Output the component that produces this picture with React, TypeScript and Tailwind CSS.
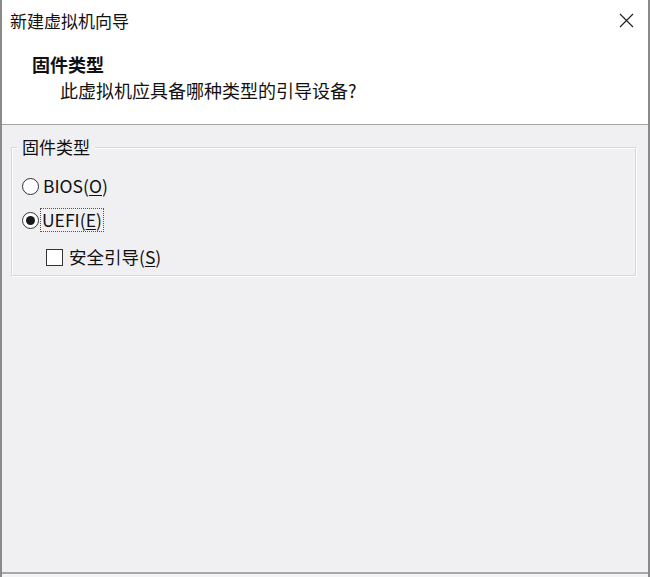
import React from 'react';

const font = { fontFamily: '"Noto Sans CJK SC", "Noto Sans", sans-serif' };

function Radio({ checked }: { checked?: boolean }) {
  return (
    <span className="w-[17px] h-[17px] rounded-full border border-[#333] bg-white flex items-center justify-center shrink-0">
      {checked && <span className="w-[9px] h-[9px] rounded-full bg-[#1a1a1a]" />}
    </span>
  );
}

export default function App() {
  return (
    <div
      className="w-[650px] h-[577px] flex flex-col bg-[#f0f0f2] border-x-2 border-[#8a8a8a] text-[#111] overflow-hidden"
      style={font}
    >
      {/* header */}
      <div className="h-[125px] bg-white border-b border-[#a5a5a5] flex flex-col shrink-0">
        <div className="h-[40px] flex items-center justify-between pl-[8px] pr-[14px]">
          <span className="text-[17px] leading-none">新建虚拟机向导</span>
          <svg width="15" height="15" viewBox="0 0 15 15" className="mt-[1px]">
            <path d="M1 1L14 14M14 1L1 14" stroke="#222" strokeWidth="1.2" />
          </svg>
        </div>
        <div className="pl-[30px] pt-[15px] text-[18px] font-bold leading-none">固件类型</div>
        <div className="pl-[58px] pt-[8px] text-[18px] leading-none">此虚拟机应具备哪种类型的引导设备?</div>
      </div>

      {/* body */}
      <div className="flex-1 flex flex-col pt-[22px] pl-[9px] pr-[12px]">
        <div className="relative h-[129px] border border-[#d8d8da] shadow-[inset_1px_1px_0_#fff,1px_1px_0_#fff]">
          <span className="absolute -top-[13px] left-[5px] bg-[#f0f0f2] px-[5px] text-[17px] leading-[24px]">固件类型</span>
          <div className="flex flex-col pt-[26px] pl-[10px] text-[17.5px]">
            <label className="flex items-center gap-[4px] h-[24px]">
              <Radio />
              <span>
                BIOS(<span className="underline underline-offset-2">O</span>)
              </span>
            </label>
            <label className="flex items-center gap-[2px] h-[24px] mt-[10px]">
              <Radio checked />
              <span className="outline-1 outline-dotted outline-[#555] px-[1px] leading-[22px]">
                UEFI(<span className="underline underline-offset-2">E</span>)
              </span>
            </label>
            <label className="flex items-center gap-[6px] h-[24px] mt-[13px] pl-[24px]">
              <span className="w-[17px] h-[17px] border border-[#333] bg-white shrink-0" />
              <span>
                安全引导(<span className="underline underline-offset-2">S</span>)
              </span>
            </label>
          </div>
        </div>
      </div>

      {/* footer line */}
      <div className="h-[5px] border-t-2 border-[#a8a8a8] bg-[#f4f4f6] shrink-0" />
    </div>
  );
}
